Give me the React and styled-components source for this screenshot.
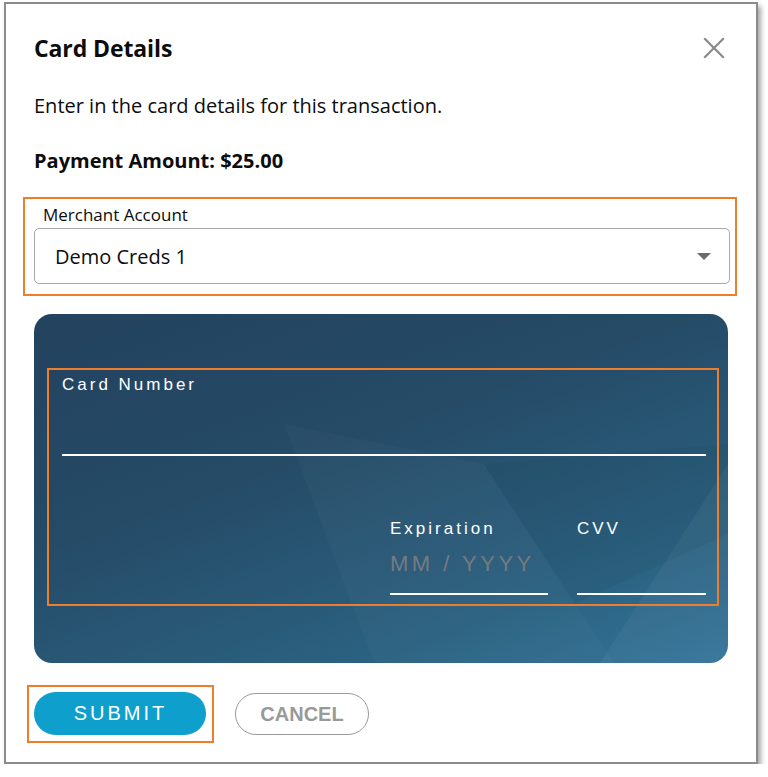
import React from 'react';
import styled, { createGlobalStyle } from 'styled-components';

const GlobalStyle = createGlobalStyle`
  html, body {
    margin: 0;
    padding: 0;
    background: #ffffff;
  }
  body {
    font-family: "Open Sans", "Noto Sans", Arial, sans-serif;
    color: #111;
  }
  * { box-sizing: border-box; }
`;

const Dialog = styled.div`
  width: 754px;
  height: 762px;
  margin: 2px 0 0 4px;
  background: #fff;
  border: 2px solid #8c8c8c;
  box-shadow: 3px 4px 5px rgba(0, 0, 0, 0.35);
  padding: 29px 26px 0 28px;
  display: flex;
  flex-direction: column;
`;

const Header = styled.div`
  display: flex;
  justify-content: space-between;
  align-items: center;
  height: 30px;
`;

const Title = styled.h2`
  margin: 0;
  font-size: 23px;
  line-height: 30px;
  font-weight: 700;
  letter-spacing: -0.1px;
  color: #0c0c0c;
`;

const CloseButton = styled.button`
  border: none;
  background: none;
  padding: 0;
  margin-right: 5px;
  width: 22px;
  height: 22px;
  color: #8a8a8a;
  cursor: pointer;
  display: flex;
  align-items: center;
  justify-content: center;
`;

const Description = styled.p`
  margin: 29px 0 0;
  font-size: 20px;
  line-height: 28px;
  color: #0c0c0c;
`;

const Amount = styled.p`
  margin: 27px 0 0;
  font-size: 20px;
  line-height: 28px;
  font-weight: 700;
  color: #0c0c0c;
`;

const Highlight = styled.div`
  border: 2px solid #f07d2c;
  margin: ${({ $margin }) => $margin};
  padding: ${({ $padding }) => $padding};
`;

const FieldLabel = styled.label`
  display: block;
  margin-left: 9px;
  font-size: 17px;
  line-height: 20px;
  color: #0c0c0c;
`;

const Select = styled.div`
  margin-top: 3px;
  height: 56px;
  border: 1px solid #a9a9a9;
  border-radius: 5px;
  display: flex;
  align-items: center;
  justify-content: space-between;
  padding: 0 18px 0 20px;
  font-size: 20px;
  color: #0c0c0c;
`;

const Caret = styled.span`
  width: 0;
  height: 0;
  border-left: 7px solid transparent;
  border-right: 7px solid transparent;
  border-top: 7px solid #6b6b6b;
`;

const Card = styled.div`
  position: relative;
  overflow: hidden;
  margin-top: 18px;
  width: 694px;
  height: 349px;
  border-radius: 18px;
  background: linear-gradient(160deg, #23425e 0%, #254b67 40%, #2b6281 78%, #33739a 100%);
  padding: 54px 9px 0 13px;
`;

const CardPattern = styled.svg`
  position: absolute;
  inset: 0;
  width: 100%;
  height: 100%;
  pointer-events: none;
`;

const CardFields = styled.div`
  position: relative;
  border: 2px solid #f07d2c;
  height: 238px;
  padding: 5px 11px 0 13px;
  display: grid;
  grid-template-columns: 1fr 158px 129px;
  grid-template-rows: auto 1fr;
  column-gap: 29px;
`;

const CardField = styled.div`
  grid-column: ${({ $col }) => $col};
  display: flex;
  flex-direction: column;
  justify-content: ${({ $end }) => ($end ? 'flex-end' : 'flex-start')};
  padding-bottom: ${({ $end }) => ($end ? '9px' : '0')};
`;

const CardLabel = styled.span`
  font-family: "Liberation Sans", Arial, sans-serif;
  font-size: 17px;
  line-height: 20px;
  letter-spacing: 3px;
  color: #ffffff;
`;

const CardInput = styled.div`
  height: ${({ $h }) => $h}px;
  border-bottom: 2px solid #ffffff;
  display: flex;
  align-items: center;
  font-family: "Liberation Sans", Arial, sans-serif;
  font-size: 22px;
  letter-spacing: 3.5px;
  color: #757b80;
  padding-bottom: 4px;
`;

const Actions = styled.div`
  margin-top: 22px;
  display: flex;
  align-items: center;
  gap: 21px;
`;

const SubmitButton = styled.button`
  width: 172px;
  height: 43px;
  border: none;
  border-radius: 22px;
  background: #0e9fcc;
  color: #fff;
  font-family: "Liberation Sans", Arial, sans-serif;
  font-size: 20px;
  letter-spacing: 3px;
  padding: 0 0 0 1px;
  cursor: pointer;
`;

const CancelButton = styled.button`
  width: 134px;
  height: 42px;
  border: 1.5px solid #9a9a9a;
  border-radius: 21px;
  background: #fff;
  color: #999;
  font-family: "Liberation Sans", Arial, sans-serif;
  font-size: 20px;
  font-weight: 700;
  cursor: pointer;
`;

export default function App() {
  return (
    <>
      <GlobalStyle />
      <Dialog>
        <Header>
          <Title>Card Details</Title>
          <CloseButton aria-label="Close">
            <svg width="22" height="22" viewBox="0 0 22 22">
              <path d="M2 2 L20 20 M20 2 L2 20" stroke="currentColor" strokeWidth="2.2" strokeLinecap="square" />
            </svg>
          </CloseButton>
        </Header>
        <Description>Enter in the card details for this transaction.</Description>
        <Amount>Payment Amount: $25.00</Amount>

        <Highlight $margin="22px -7px 0 -11px" $padding="6px 5px 10px 9px">
          <FieldLabel>Merchant Account</FieldLabel>
          <Select>
            <span>Demo Creds 1</span>
            <Caret />
          </Select>
        </Highlight>

        <Card>
          <CardPattern viewBox="0 0 694 349" preserveAspectRatio="none">
            <polygon points="250,110 450,150 580,349 340,349" fill="#ffffff" opacity="0.022" />
            <polygon points="450,150 694,130 694,220 540,290" fill="#000000" opacity="0.035" />
            <polygon points="694,150 694,349 566,349" fill="#ffffff" opacity="0.045" />
          </CardPattern>
          <CardFields>
            <CardField $col="1 / 4">
              <CardLabel>Card Number</CardLabel>
              <CardInput $h={61} />
            </CardField>
            <CardField $col="2" $end>
              <CardLabel>Expiration</CardLabel>
              <CardInput $h={56}>MM / YYYY</CardInput>
            </CardField>
            <CardField $col="3" $end>
              <CardLabel>CVV</CardLabel>
              <CardInput $h={56} />
            </CardField>
          </CardFields>
        </Card>

        <Actions>
          <Highlight $margin="0 0 0 -7px" $padding="5px 6px 6px 5px">
            <SubmitButton>SUBMIT</SubmitButton>
          </Highlight>
          <CancelButton>CANCEL</CancelButton>
        </Actions>
      </Dialog>
    </>
  );
}
